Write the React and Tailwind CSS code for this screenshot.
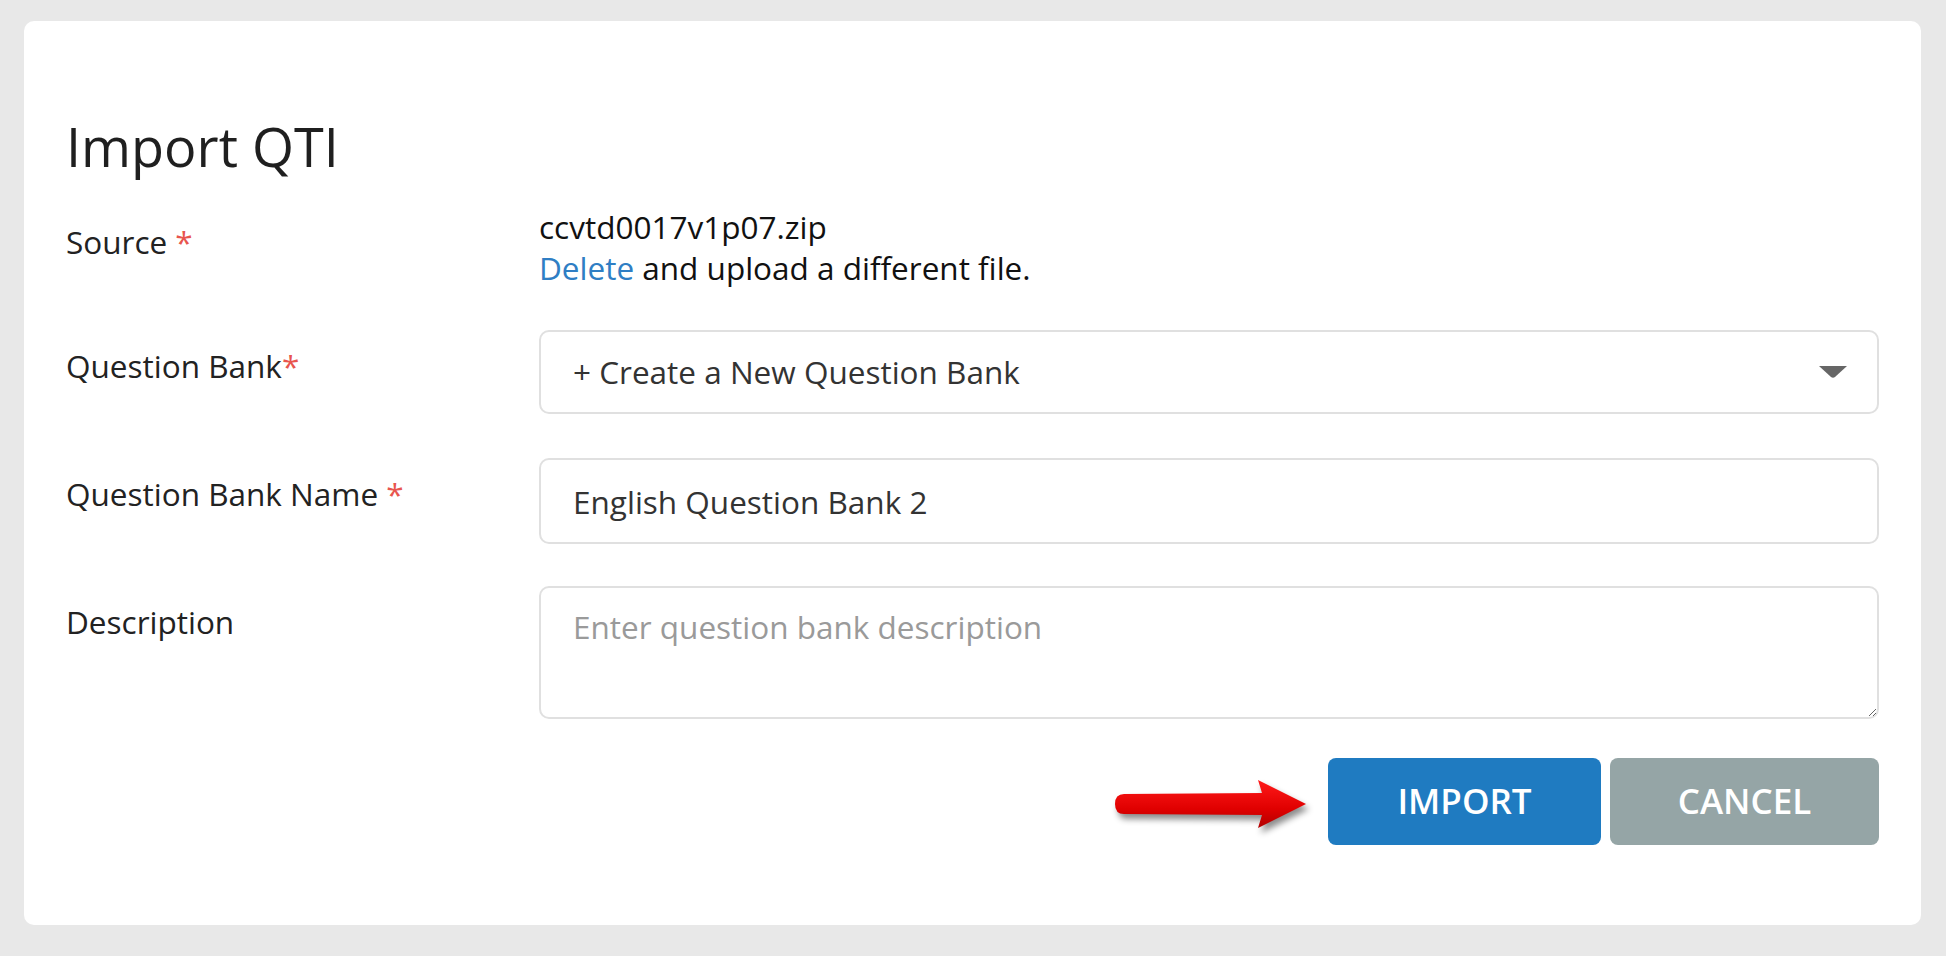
import React from 'react';

// Champ requis : astérisque rouge
function Required({ spaced = true }) {
  return <span className={`text-[#e8554e] ${spaced ? 'ml-2' : ''}`}>*</span>;
}

function Row({ label, children, className = '' }) {
  return (
    <div className={`flex items-start ${className}`}>
      <div className="w-[473px] shrink-0 pt-[15px] leading-[41px] text-[#222]">{label}</div>
      <div className="flex-1 min-w-0">{children}</div>
    </div>
  );
}

function Arrow() {
  return (
    <svg
      width="194"
      height="50"
      viewBox="0 0 194 50"
      className="drop-shadow-[3px_5px_3px_rgba(0,0,0,0.45)]"
    >
      <defs>
        <linearGradient id="arrowFill" x1="0" y1="0" x2="0" y2="1">
          <stop offset="0" stopColor="#ff1a1a" />
          <stop offset="0.6" stopColor="#e00000" />
          <stop offset="1" stopColor="#b00000" />
        </linearGradient>
      </defs>
      <path
        d="M10 15 L148 14 L144 1 L192 25 L144 49 L148 36 L10 35 Q1 35 1 25 Q1 15 10 15 Z"
        fill="url(#arrowFill)"
      />
    </svg>
  );
}

export default function App() {
  return (
    <div className="min-h-[956px] bg-[#e8e8e8] pt-[21px] pl-[24px] pr-[25px] pb-[30px] font-['Open_Sans','Liberation_Sans',sans-serif] text-[31.5px]">
      <div className="bg-white rounded-[10px] px-[42px] pt-[93px] pb-[80px]">
        <h1 className="text-[54px] leading-[64px] text-[#1f1f1f] font-normal">Import QTI</h1>

        {/* Source */}
        <Row label={<>Source<Required /></>} className="mt-[28px]">
          <div className="leading-[41px] text-[#111]">
            <div>ccvtd0017v1p07.zip</div>
            <div>
              <a href="#" className="text-[#2f7ec4]">Delete</a> and upload a different file.
            </div>
          </div>
        </Row>

        {/* Question Bank */}
        <Row label={<>Question Bank<Required spaced={false} /></>} className="mt-[42px]">
          <div className="h-[84px] flex items-center justify-between border-2 border-[#e0e0e0] rounded-[10px] pl-[32px] pr-[30px] text-[#333]">
            <span>+ Create a New Question Bank</span>
            <svg width="28" height="12" viewBox="0 0 28 12">
              <path d="M0 0 H28 L16 11 Q14 12.5 12 11 Z" fill="#666" />
            </svg>
          </div>
        </Row>

        {/* Question Bank Name */}
        <Row label={<>Question Bank Name<Required /></>} className="mt-[44px]">
          <input
            defaultValue="English Question Bank 2"
            className="w-full h-[86px] border-2 border-[#e0e0e0] rounded-[10px] px-[32px] text-[#333] outline-none"
          />
        </Row>

        {/* Description */}
        <Row label="Description" className="mt-[42px]">
          <textarea
            placeholder="Enter question bank description"
            className="block w-full h-[133px] border-2 border-[#e0e0e0] rounded-[10px] px-[32px] pt-[18px] leading-[41px] text-[#333] placeholder:text-[#9a9a9a] outline-none"
          />
        </Row>

        {/* Actions */}
        <div className="flex items-center justify-end mt-[39px]">
          <div className="mr-[20px] mt-[4px]">
            <Arrow />
          </div>
          <button className="w-[273px] h-[87px] rounded-[8px] bg-[#1f7bc1] text-white text-[35px] font-semibold">
            IMPORT
          </button>
          <button className="ml-[9px] w-[269px] h-[87px] rounded-[8px] bg-[#95a5a6] text-white text-[35px] font-semibold">
            CANCEL
          </button>
        </div>
      </div>
    </div>
  );
}
